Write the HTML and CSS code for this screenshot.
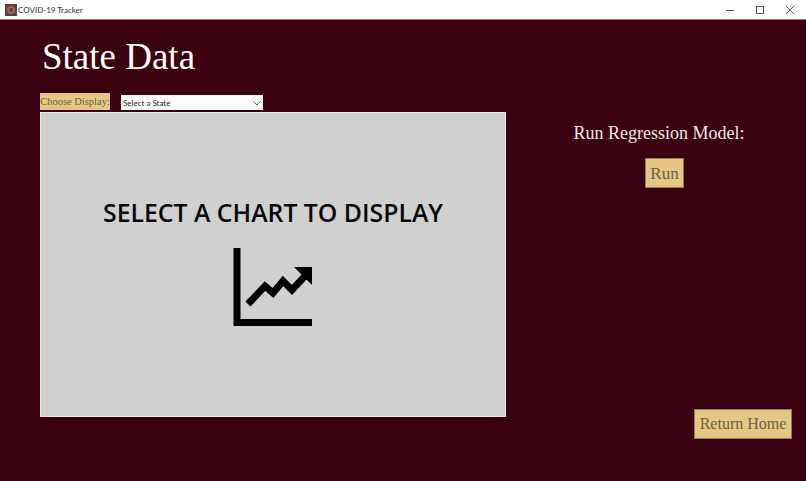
FILE: index.html
```html
<!DOCTYPE html>
<html lang="en">
  <head>
    <meta charset="UTF-8" />
    <meta name="viewport" content="width=device-width, initial-scale=1.0" />
    <title>COVID-19 Tracker</title>
    <link rel="stylesheet" href="styles.css">
  </head>
  <body>
    <div class="titlebar">
      <div class="app">
        <svg class="app-icon" width="12" height="12" viewBox="0 0 12 12">
          <rect width="12" height="12" fill="#5a4040" />
          <circle cx="6" cy="6" r="4" fill="#a0605c" />
          <circle cx="6" cy="6" r="2" fill="#6e3a3a" />
        </svg>
        <span>COVID-19 Tracker</span>
      </div>
      <div class="window-btns">
        <svg width="10" height="10" viewBox="0 0 10 10"><path d="M1 5.5h8" stroke="#555" fill="none" /></svg>
        <svg width="10" height="10" viewBox="0 0 10 10"><rect x="1.5" y="1.5" width="7" height="7" stroke="#555" fill="none" /></svg>
        <svg width="10" height="10" viewBox="0 0 10 10"><path d="M1 1l8 8M9 1l-8 8" stroke="#555" fill="none" /></svg>
      </div>
    </div>
    <div class="main">
      <div class="left">
        <h1 class="heading">State Data</h1>
        <div class="controls">
          <div class="label">Choose Display:</div>
          <div class="select-wrap">
            <select class="select"><option>Select a State</option></select>
            <svg class="chevron" width="8" height="5" viewBox="0 0 8 5"><path d="M.5.5L4 4 7.5.5" stroke="#666" fill="none" /></svg>
          </div>
        </div>
        <div class="chart-panel">
          <div class="chart-title">SELECT A CHART TO DISPLAY</div>
          <svg class="chart-icon" width="80" height="80" viewBox="0 0 80 80">
            <path d="M4 0V74.500H79" stroke="#000" stroke-width="7" fill="none" />
            <path d="M15 56L32 38L40 45L50 33L59 42L72 28" stroke="#000" stroke-width="7" fill="none" />
            <path d="M61 19H79V37Z" fill="#000" />
          </svg>
        </div>
      </div>
      <div class="right">
        <div class="model">
          <div class="model-title">Run Regression Model:</div>
          <button class="btn btn-run">Run</button>
        </div>
        <button class="btn btn-home">Return Home</button>
      </div>
    </div>
  </body>
</html>
```

FILE: styles.css
```css
:root {
  --bg: #3a0010;
  --tan: #e5c583;
  --tan-text: #6b634a;
  --panel: #d0d0d0;
}
html, body {
  margin: 0;
  height: 100%;
  overflow: hidden;
}
body {
  display: flex;
  flex-direction: column;
  background: var(--bg);
  font-family: "Liberation Serif", serif;
}
.titlebar {
  height: 19px;
  background: #fff;
  border-bottom: 1px solid #8a7a7e;
  display: flex;
  justify-content: space-between;
  align-items: center;
  flex-shrink: 0;
}
.app {
  display: flex;
  align-items: center;
  gap: 1px;
  padding-left: 5px;
  font-family: Lato, sans-serif;
  font-size: 8px;
  color: #333;
}
.window-btns {
  display: flex;
  gap: 20px;
  padding-right: 11px;
}
.main {
  flex: 1;
  display: flex;
  min-height: 0;
}
.left {
  width: 466px;
  margin-left: 40px;
}
.heading {
  margin: 16px 0 0 2px;
  font-size: 37px;
  line-height: 42px;
  font-weight: 400;
  color: #fff;
}
.controls {
  display: flex;
  align-items: flex-end;
  gap: 11px;
  margin-top: 15px;
}
.label {
  width: 70px;
  height: 17px;
  line-height: 17px;
  background: var(--tan);
  color: var(--tan-text);
  font-size: 10.5px;
  text-align: center;
  white-space: nowrap;
}
.select-wrap {
  position: relative;
  height: 15px;
}
.select {
  display: block;
  appearance: none;
  width: 142px;
  height: 15px;
  padding: 0 0 0 2px;
  border: 0;
  border-radius: 0;
  background: #fff;
  color: #222;
  font-family: Lato, sans-serif;
  font-size: 8px;
}
.chevron {
  position: absolute;
  right: 2px;
  top: 6px;
}
.chart-panel {
  box-sizing: border-box;
  height: 305px;
  margin-top: 2px;
  background: var(--panel);
  border: 1.5px solid #ece8e8;
  display: flex;
  flex-direction: column;
  align-items: center;
  padding-top: 84px;
}
.chart-title {
  font-family: "Open Sans", sans-serif;
  font-size: 24.8px;
  line-height: 30px;
  font-weight: 600;
  color: #080808;
}
.chart-icon {
  margin-top: 21px;
}
.right {
  flex: 1;
  display: flex;
  flex-direction: column;
  align-items: flex-end;
  padding: 103px 14px 42px 0;
}
.model {
  width: 234px;
  margin-right: 16px;
  display: flex;
  flex-direction: column;
  align-items: center;
}
.model-title {
  font-size: 18px;
  line-height: 20px;
  color: #f3e6ea;
}
.btn {
  padding: 0;
  background: var(--tan);
  color: var(--tan-text);
  border: 1px solid #8f7d55;
  border-radius: 0;
  font-family: "Liberation Serif", serif;
}
.btn-run {
  width: 39px;
  height: 30px;
  padding-top: 2px;
  margin-top: 15px;
  margin-left: 11px;
  font-size: 17px;
}
.btn-home {
  width: 98px;
  height: 30px;
  margin-top: auto;
  font-size: 16px;
}
```
